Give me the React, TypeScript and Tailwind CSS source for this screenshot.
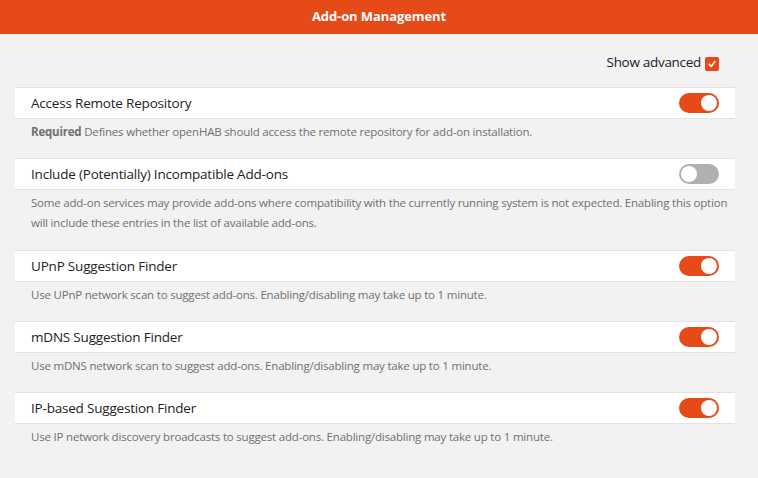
import React from "react";

type Item = { label: string; on: boolean; desc: React.ReactNode };

const items: Item[] = [
  {
    label: "Access Remote Repository",
    on: true,
    desc: (
      <>
        <span className="font-bold">Required</span> Defines whether openHAB should access the remote repository for add-on installation.
      </>
    ),
  },
  {
    label: "Include (Potentially) Incompatible Add-ons",
    on: false,
    desc: "Some add-on services may provide add-ons where compatibility with the currently running system is not expected. Enabling this option will include these entries in the list of available add-ons.",
  },
  {
    label: "UPnP Suggestion Finder",
    on: true,
    desc: "Use UPnP network scan to suggest add-ons. Enabling/disabling may take up to 1 minute.",
  },
  {
    label: "mDNS Suggestion Finder",
    on: true,
    desc: "Use mDNS network scan to suggest add-ons. Enabling/disabling may take up to 1 minute.",
  },
  {
    label: "IP-based Suggestion Finder",
    on: true,
    desc: "Use IP network discovery broadcasts to suggest add-ons. Enabling/disabling may take up to 1 minute.",
  },
];

function Toggle({ on }: { on: boolean }) {
  return on ? (
    <div className="w-[40px] h-[20px] rounded-full bg-[#e64a19] flex items-center justify-end pr-[2px]">
      <div className="w-[16px] h-[16px] rounded-full bg-white" />
    </div>
  ) : (
    <div className="w-[40px] h-[20px] rounded-full bg-[#b0b0b0] flex items-center justify-start pl-[2px]">
      <div className="w-[16px] h-[16px] rounded-full bg-white" />
    </div>
  );
}

export default function App() {
  return (
    <div
      className="w-[758px] h-[478px] bg-[#f2f2f2] overflow-hidden"
      style={{ fontFamily: '"Open Sans", "Noto Sans", sans-serif' }}
    >
      <div className="h-[34px] bg-[#e64a19] flex items-center justify-center">
        <span className="text-white font-bold text-[13px] tracking-[-0.1px]">Add-on Management</span>
      </div>
      <div className="flex justify-end items-center pr-[39px] pt-[14px] h-[53px] pb-[10px] gap-[4px]">
        <span className="text-[13.5px] text-[#222] tracking-[-0.3px]">Show advanced</span>
        <div className="w-[14px] h-[14px] rounded-[2px] bg-[#e64a19] flex items-center justify-center mt-[2px]">
          <svg width="10" height="10" viewBox="0 0 10 10" fill="none">
            <path d="M2.2 5.4 L4.2 7.4 L7.8 2.6" stroke="white" strokeWidth="1.6" strokeLinecap="round" strokeLinejoin="round" />
          </svg>
        </div>
      </div>
      <div className="flex flex-col">
        {items.map((it, i) => (
          <div key={i} className="flex flex-col">
            <div className="mx-[15px] w-[720px] h-[32px] bg-white border-y border-[#e2e2e2] flex items-center justify-between pl-[16px] pr-[16px]">
              <span className="text-[13.5px] text-[#222] tracking-[-0.2px]">{it.label}</span>
              <Toggle on={it.on} />
            </div>
            <div
              className={
                "pl-[31px] pr-[20px] pt-[3px] text-[11.5px] leading-[20px] text-[#707070] tracking-[-0.2px] " +
                (i === 1 ? "pb-[17px]" : "pb-[16px]")
              }
            >
              {it.desc}
            </div>
          </div>
        ))}
      </div>
    </div>
  );
}
